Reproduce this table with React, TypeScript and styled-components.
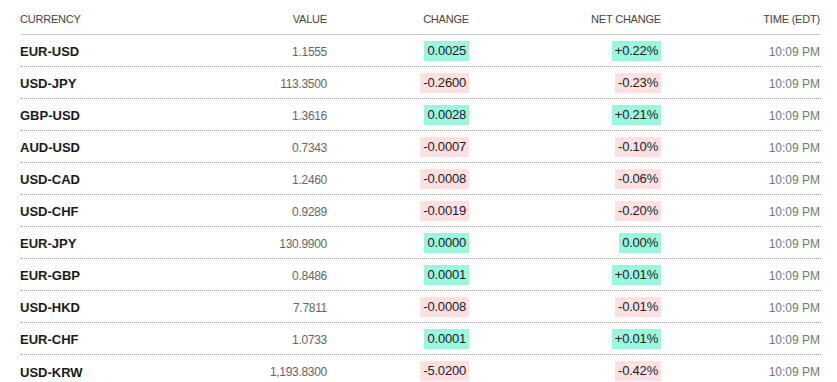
import styled, { createGlobalStyle } from "styled-components";

const GlobalStyle = createGlobalStyle`
  body {
    margin: 0;
    background: #ffffff;
    font-family: "Liberation Sans", Arial, sans-serif;
  }
`;

type Rate = {
  pair: string;
  value: string;
  change: string;
  net: string;
  time: string;
};

const rates: Rate[] = [
  { pair: "EUR-USD", value: "1.1555", change: "0.0025", net: "+0.22%", time: "10:09 PM" },
  { pair: "USD-JPY", value: "113.3500", change: "-0.2600", net: "-0.23%", time: "10:09 PM" },
  { pair: "GBP-USD", value: "1.3616", change: "0.0028", net: "+0.21%", time: "10:09 PM" },
  { pair: "AUD-USD", value: "0.7343", change: "-0.0007", net: "-0.10%", time: "10:09 PM" },
  { pair: "USD-CAD", value: "1.2460", change: "-0.0008", net: "-0.06%", time: "10:09 PM" },
  { pair: "USD-CHF", value: "0.9289", change: "-0.0019", net: "-0.20%", time: "10:09 PM" },
  { pair: "EUR-JPY", value: "130.9900", change: "0.0000", net: "0.00%", time: "10:09 PM" },
  { pair: "EUR-GBP", value: "0.8486", change: "0.0001", net: "+0.01%", time: "10:09 PM" },
  { pair: "USD-HKD", value: "7.7811", change: "-0.0008", net: "-0.01%", time: "10:09 PM" },
  { pair: "EUR-CHF", value: "1.0733", change: "0.0001", net: "+0.01%", time: "10:09 PM" },
  { pair: "USD-KRW", value: "1,193.8300", change: "-5.0200", net: "-0.42%", time: "10:09 PM" },
];

const App = () => {
  return (
    <Wrapper>
      <GlobalStyle />
      <HeadRow>
        <HeadCell>Currency</HeadCell>
        <HeadCell $right>Value</HeadCell>
        <HeadCell $right>Change</HeadCell>
        <HeadCell $right>Net Change</HeadCell>
        <HeadCell $right>Time (EDT)</HeadCell>
      </HeadRow>
      {rates.map((r) => {
        const down = r.change.startsWith("-");
        return (
          <Row key={r.pair}>
            <Pair>{r.pair}</Pair>
            <Value>{r.value}</Value>
            <Cell>
              <Badge $down={down}>{r.change}</Badge>
            </Cell>
            <Cell>
              <Badge $down={down}>{r.net}</Badge>
            </Cell>
            <Time>{r.time}</Time>
          </Row>
        );
      })}
    </Wrapper>
  );
};

export default App;

const Wrapper = styled.div`
  width: 801px;
  margin-left: 20px;
`;

const HeadRow = styled.div`
  display: grid;
  grid-template-columns: 150px 157px 142px 192px 159px;
  height: 35px;
  align-items: center;
  border-bottom: 1px solid #cccccc;
  box-sizing: border-box;
  padding-top: 3px;
`;

const HeadCell = styled.div<{ $right?: boolean }>`
  font-size: 11px;
  text-transform: uppercase;
  color: #444444;
  text-align: ${(p) => (p.$right ? "right" : "left")};
  letter-spacing: -0.2px;
`;

const Row = styled.div`
  display: grid;
  grid-template-columns: 150px 157px 142px 192px 159px;
  height: 32px;
  box-sizing: border-box;
  align-items: center;
  border-bottom: 1px dotted #999999;
  &:last-child {
    border-bottom: none;
  }
`;

const Pair = styled.div`
  padding-top: 2px;
  font-size: 13px;
  font-weight: 700;
  color: #1a1a1a;
`;

const Cell = styled.div`
  display: flex;
  justify-content: flex-end;
`;

const Value = styled.div`
  padding-top: 2px;
  text-align: right;
  font-size: 12px;
  color: #666666;
  letter-spacing: -0.3px;
`;

const Badge = styled.span<{ $down: boolean }>`
  display: inline-block;
  height: 20px;
  line-height: 20px;
  padding: 0 3px;
  font-size: 13px;
  letter-spacing: -0.2px;
  color: #222222;
  background: ${(p) => (p.$down ? "#fde0e1" : "#9ef4dc")};
`;

const Time = styled.div`
  padding-top: 2px;
  text-align: right;
  font-size: 12px;
  color: #777777;
`;
